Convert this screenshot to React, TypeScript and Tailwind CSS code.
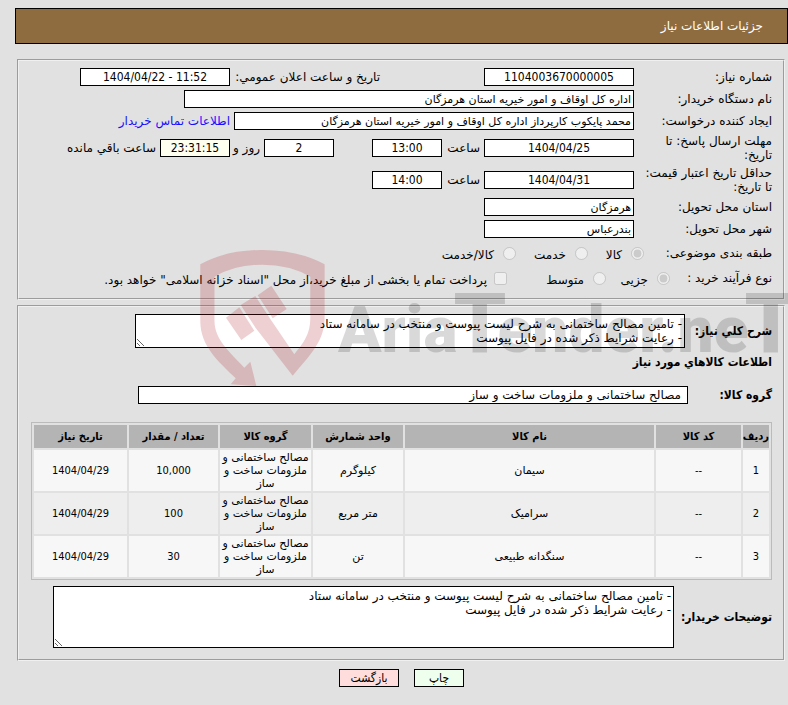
import type { ReactNode } from "react"
import clsx from "clsx"

const items = [
  { id: 1, code: "--", name: "سیمان", unit: "کیلوگرم", group: "مصالح ساختمانی و ملزومات ساخت و ساز", qty: "10,000", date: "1404/04/29" },
  { id: 2, code: "--", name: "سرامیک", unit: "متر مربع", group: "مصالح ساختمانی و ملزومات ساخت و ساز", qty: "100", date: "1404/04/29" },
  { id: 3, code: "--", name: "سنگدانه طبیعی", unit: "تن", group: "مصالح ساختمانی و ملزومات ساخت و ساز", qty: "30", date: "1404/04/29" },
]

const description =
  "- تامین مصالح ساختمانی به شرح لیست پیوست و منتخب در سامانه ستاد\n- رعایت شرایط ذکر شده در فایل پیوست"

// condensed face for numbers, bold captions and buttons
const condensed = "font-['DejaVu_Sans_Condensed','DejaVu_Sans',sans-serif]"

function Field({ id, value, className }: { id: string; value: string; className?: string }) {
  return (
    <input
      id={id}
      type="text"
      readOnly
      defaultValue={value}
      className={clsx("h-[18px] shrink-0 border border-black", className)}
    />
  )
}

function NumberField({ id, value, className }: { id: string; value: string; className?: string }) {
  return <Field id={id} value={value} className={clsx("text-center [direction:ltr]", condensed, className)} />
}

function Row({ id, label, className, children }: { id: string; label: string; className?: string; children: ReactNode }) {
  return (
    <div className={clsx("flex items-center", className)}>
      <label htmlFor={id} className="w-[138px] shrink-0 pl-[2px]">
        {label}
      </label>
      {children}
    </div>
  )
}

function Choice({ name, label, checked, className }: { name: string; label: string; checked?: boolean; className?: string }) {
  return (
    <label className={clsx("flex shrink-0 items-center gap-[9px]", className)}>
      <input type="radio" name={name} disabled defaultChecked={checked} className="size-[13px] shrink-0" />
      <span className="whitespace-nowrap pt-1">{label}</span>
    </label>
  )
}

function Watermark() {
  return (
    <svg
      viewBox="200 250 588 140"
      className="pointer-events-none absolute left-[200px] top-[250px] h-[140px] w-[588px]"
      aria-hidden="true"
    >
      <g fill="#aa141e" fillOpacity="0.2">
        <path d="M200.300 264.300Q226 250 262.300 250T324.600 264.300V318C324.600 340 312 353 292.700 375.700L255.700 328L240.700 305L255.300 296L271 320L294.300 354.300C304 342 310.300 334 310.300 318V276.700Q290 264.700 262.300 264.700T214.500 276.700V321C214.500 340 230 352 244.300 367.700L250.300 361.700L256.300 386L230.700 384.300L235.700 378.300C218 361 200.300 346 200.300 321Z" />
        <path d="M226 317.700L239.300 307.300L254.300 330.700L241.300 340Z" />
        <path d="M257.700 295.300L271.300 285.700L286.700 309L272.700 318.300Z" />
      </g>
      <text x="338" y="352" direction="ltr" className="fill-black/15 font-['Roboto',sans-serif] text-[64px] font-black">
        Aria<tspan dx="-4" className="text-[84px]">T</tspan><tspan dx="-9">ender.ne</tspan><tspan dx="-4" className="text-[84px]">T</tspan>
      </text>
    </svg>
  )
}

export default function App() {
  return (
    <div
      dir="rtl"
      className="relative min-h-screen overflow-hidden bg-[#e1e1e1] pt-2 pb-4 font-['DejaVu_Sans',sans-serif] text-[12px] leading-[14px] text-black"
    >
      {/* Title bar */}
      <header className="ml-[15px] flex h-9 items-center border border-black bg-[#8f6c40] px-6 text-white">
        <h1>جزئیات اطلاعات نیاز</h1>
      </header>

      <main className="mt-[15px] mr-[3px] ml-[17px]">
        {/* General information */}
        <fieldset className="border-2 border-[#f0f0f0] px-[11px] pt-[5px] pb-2 [border-style:groove]">
          <Row id="number" label="شماره نیاز:" className="h-[22px]">
            <NumberField id="number" value="1104003670000005" className="w-[150px] bg-white" />
            <label htmlFor="announced" className="mr-[104px] w-[150px] shrink-0 whitespace-nowrap">
              تاریخ و ساعت اعلان عمومي:
            </label>
            <NumberField id="announced" value="1404/04/22 - 11:52" className="w-[150px] bg-white" />
          </Row>
          <Row id="agency" label="نام دستگاه خریدار:" className="h-[22px]">
            <Field id="agency" value="اداره کل اوقاف و امور خیریه استان هرمزگان" className="w-[450px] bg-white px-[2px] text-[11px]" />
          </Row>
          <Row id="creator" label="ایجاد کننده درخواست:" className="h-[22px]">
            <Field id="creator" value="محمد پایکوب کارپرداز اداره کل اوقاف و امور خیریه استان هرمزگان" className="w-[400px] bg-white px-[2px] text-[11px]" />
            <a href="#" className="mr-1 whitespace-nowrap text-[#1a0dff]">
              اطلاعات تماس خریدار
            </a>
          </Row>
          <Row id="deadline" label="مهلت ارسال پاسخ: تا تاریخ:" className="h-8">
            <NumberField id="deadline" value="1404/04/25" className="w-[150px] bg-white" />
            <label htmlFor="deadline-time" className="w-[42px] shrink-0 pr-1">ساعت</label>
            <NumberField id="deadline-time" value="13:00" className="w-[70px] bg-white" />
            <NumberField id="days" value="2" className="mr-[38px] w-[70px] bg-white" />
            <label htmlFor="days" className="w-[34px] shrink-0 whitespace-nowrap pr-1">روز و</label>
            <NumberField id="remaining" value="23:31:15" className="w-[70px] bg-[#fffff0]" />
            <label htmlFor="remaining" className="mr-1 whitespace-nowrap">ساعت باقي مانده</label>
          </Row>
          <Row id="validity" label="حداقل تاریخ اعتبار قیمت: تا تاریخ:" className="h-8">
            <NumberField id="validity" value="1404/04/31" className="w-[150px] bg-white" />
            <label htmlFor="validity-time" className="w-[42px] shrink-0 pr-1">ساعت</label>
            <NumberField id="validity-time" value="14:00" className="w-[70px] bg-white" />
          </Row>
          <Row id="province" label="استان محل تحویل:" className="h-[22px]">
            <Field id="province" value="هرمزگان" className="w-[150px] bg-white px-[2px] text-[11px]" />
          </Row>
          <Row id="city" label="شهر محل تحویل:" className="h-[22px]">
            <Field id="city" value="بندرعباس" className="w-[150px] bg-white px-[2px] text-[11px]" />
          </Row>

          <div className="flex h-[26px] items-center">
            <span className="w-[128px] shrink-0">طبقه بندی موضوعی:</span>
            <Choice name="category" label="کالا" checked className="w-14" />
            <Choice name="category" label="خدمت" className="w-[72px]" />
            <Choice name="category" label="کالا/خدمت" />
          </div>
          <div className="flex h-6 items-center">
            <span className="w-[102px] shrink-0">نوع فرآیند خرید :</span>
            <Choice name="process" label="جزیی" checked className="w-16" />
            <Choice name="process" label="متوسط" className="w-[99px]" />
            <label className="flex items-center gap-[7px]">
              <input type="checkbox" disabled className="size-[13px] shrink-0" />
              <span className="whitespace-nowrap pt-1">
                پرداخت تمام یا بخشی از مبلغ خرید،از محل "اسناد خزانه اسلامی" خواهد بود.
              </span>
            </label>
          </div>
        </fieldset>

        {/* Requested goods */}
        <fieldset className="mt-[5px] border-2 border-[#f0f0f0] px-[11px] pt-[7px] pb-[11px] [border-style:groove]">
          <div className="flex items-center">
            <label htmlFor="summary" className={clsx("w-[87px] shrink-0 whitespace-nowrap font-bold", condensed)}>شرح کلي نیاز:</label>
            <textarea id="summary" readOnly defaultValue={description} className="h-[34px] w-[550px] border border-black bg-white p-[2px]" />
          </div>
          <h2 className={clsx("pt-[7px] font-bold", condensed)}>اطلاعات کالاهاي مورد نیاز</h2>
          <div className="flex items-center pt-[17px]">
            <label htmlFor="goods-group" className={clsx("w-[84px] shrink-0 font-bold", condensed)}>گروه کالا:</label>
            <Field id="goods-group" value="مصالح ساختمانی و ملزومات ساخت و ساز" className="w-[550px] bg-white px-[6px]" />
          </div>

          <table className="mt-[18px] w-full max-w-[741px] table-fixed border-separate border-spacing-[2px] border border-[#bbbbbb] text-center text-[11px] leading-[13px]">
            <thead>
              <tr className={clsx("h-[23px] bg-[#b4b4b4]", condensed)}>
                <th className="w-[26px]">ردیف</th>
                <th className="w-[85px]">کد کالا</th>
                <th>نام کالا</th>
                <th className="w-[90px]">واحد شمارش</th>
                <th className="w-[91px]">گروه کالا</th>
                <th className="w-[89px]">تعداد / مقدار</th>
                <th className="w-[93px]">تاریخ نیاز</th>
              </tr>
            </thead>
            <tbody>
              {items.map((item) => (
                <tr key={item.id} className="h-[41px] odd:bg-[#f7f7f7] even:bg-[#eeeeee]">
                  <td className={condensed}>{item.id}</td>
                  <td className={condensed}>{item.code}</td>
                  <td>{item.name}</td>
                  <td>{item.unit}</td>
                  <td>{item.group}</td>
                  <td className={condensed}>{item.qty}</td>
                  <td className={condensed}>{item.date}</td>
                </tr>
              ))}
            </tbody>
          </table>

          <div className="mt-[6px] flex items-center">
            <label htmlFor="notes" className={clsx("w-[98px] shrink-0 whitespace-nowrap font-bold", condensed)}>توضیحات خریدار:</label>
            <textarea id="notes" readOnly defaultValue={description} className="h-[62px] w-[621px] border border-black bg-white p-[2px]" />
          </div>
        </fieldset>
      </main>

      <footer className="mt-2 ml-[15px] flex justify-center gap-[15px]">
        <button type="button" className={clsx("h-[18px] w-[50px] border border-black bg-[#eeffee]", condensed)}>چاپ</button>
        <button type="button" className={clsx("h-[18px] w-[60px] border border-black bg-[#ffdddd]", condensed)}>بازگشت</button>
      </footer>

      <Watermark />
    </div>
  )
}
